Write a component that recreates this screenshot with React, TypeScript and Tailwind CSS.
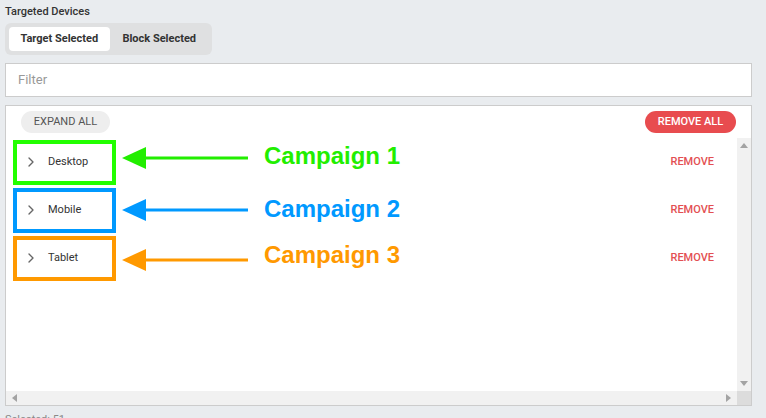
import { ChevronRight } from 'lucide-react';

const ROWS = [
  {
    name: 'Desktop',
    label: 'Campaign 1',
    border: 'border-[#22ff00]',
    text: 'text-[#22ee00] -mt-[13px]',
    arrow: '-mt-[9px]',
    fill: '#22ee00',
  },
  {
    name: 'Mobile',
    label: 'Campaign 2',
    border: 'border-[#0099ff]',
    text: 'text-[#0099ff] -mt-[3px]',
    arrow: '-mt-[1px]',
    fill: '#0099ff',
  },
  {
    name: 'Tablet',
    label: 'Campaign 3',
    border: 'border-[#ff9900]',
    text: 'text-[#ff9900] -mt-[6px]',
    arrow: 'mt-[3px]',
    fill: '#ff9900',
  },
];

function Arrow({ color }: { color: string }) {
  return (
    <svg width="128" height="24" viewBox="0 0 128 24" className="block shrink-0">
      <polygon points="0,12 24,1 24,23" fill={color} />
      <rect x="22" y="10.5" width="104" height="3" fill={color} />
    </svg>
  );
}

export default function App() {
  return (
    <div
      className="h-[418px] w-[766px] overflow-hidden bg-[#e9ecef] px-[5px] pt-[5px] text-[#333]"
      style={{ fontFamily: 'Roboto, "Liberation Sans", sans-serif' }}
    >
      <div className="text-[11px] font-medium leading-[13px]">Targeted Devices</div>

      {/* 切り替え */}
      <div className="mt-[5px] flex h-[32px] w-[207px] items-center gap-[1px] rounded-md bg-[#dfe0e1] px-[4px]">
        <div className="flex h-[24px] w-[101px] items-center justify-center rounded bg-white text-[11px] font-bold">
          Target Selected
        </div>
        <div className="flex h-[24px] w-[98px] items-center justify-center text-[11px] font-bold">
          Block Selected
        </div>
      </div>

      {/* フィルター */}
      <div className="mt-[8px] flex h-[34px] w-[747px] items-center border border-[#cccccc] bg-white px-[12px] text-[13px] text-[#999]">
        Filter
      </div>

      {/* リスト */}
      <div className="mt-[8px] flex h-[301px] w-[747px] flex-col border border-[#cccccc] bg-white">
        <div className="flex items-center justify-between px-[15px] pt-[5px]">
          <button className="flex h-[22px] w-[89px] items-center justify-center rounded-full bg-[#eeeeee] text-[11px] text-[#555]">
            EXPAND ALL
          </button>
          <button className="flex h-[22px] w-[91px] items-center justify-center rounded-full bg-[#e84c4f] text-[11px] font-medium text-white">
            REMOVE ALL
          </button>
        </div>

        <div className="mt-[5px] flex min-h-0 flex-1">
          <div className="flex-1 pl-[7px]">
            {ROWS.map((r) => (
              <div key={r.name} className="flex h-[48px] items-center">
                <div
                  className={`flex h-[45px] w-[103px] shrink-0 items-center border-4 ${r.border} pl-[6px]`}
                >
                  <ChevronRight size={16} strokeWidth={2} className="text-[#666]" />
                  <span className="ml-[9px] text-[11px]">{r.name}</span>
                </div>
                <div className={`ml-[6px] ${r.arrow}`}>
                  <Arrow color={r.fill} />
                </div>
                <span
                  className={`ml-[14px] text-[24px] font-bold leading-none ${r.text}`}
                  style={{ fontFamily: '"Liberation Sans", Arial, sans-serif' }}
                >
                  {r.label}
                </span>
                <span className="ml-auto mr-[23px] text-[11px] font-medium text-[#e34f52]">REMOVE</span>
              </div>
            ))}
          </div>
          <div className="flex w-[14px] flex-col items-center justify-between bg-[#f1f1f1] py-[5px]">
            <svg width="8" height="5" viewBox="0 0 8 5">
              <polygon points="0,5 4,0 8,5" fill="#a3a3a3" />
            </svg>
            <svg width="8" height="5" viewBox="0 0 8 5">
              <polygon points="0,0 8,0 4,5" fill="#a3a3a3" />
            </svg>
          </div>
        </div>

        <div className="flex h-[14px]">
          <div className="flex flex-1 items-center justify-between bg-[#f1f1f1] px-[6px]">
            <svg width="5" height="8" viewBox="0 0 5 8">
              <polygon points="5,0 5,8 0,4" fill="#a3a3a3" />
            </svg>
            <svg width="5" height="8" viewBox="0 0 5 8">
              <polygon points="0,0 0,8 5,4" fill="#a3a3a3" />
            </svg>
          </div>
          <div className="w-[14px] bg-[#dcdcdc]" />
        </div>
      </div>

      <div className="mt-[6px] text-[11px] text-[#888]">Selected: 51</div>
    </div>
  );
}
